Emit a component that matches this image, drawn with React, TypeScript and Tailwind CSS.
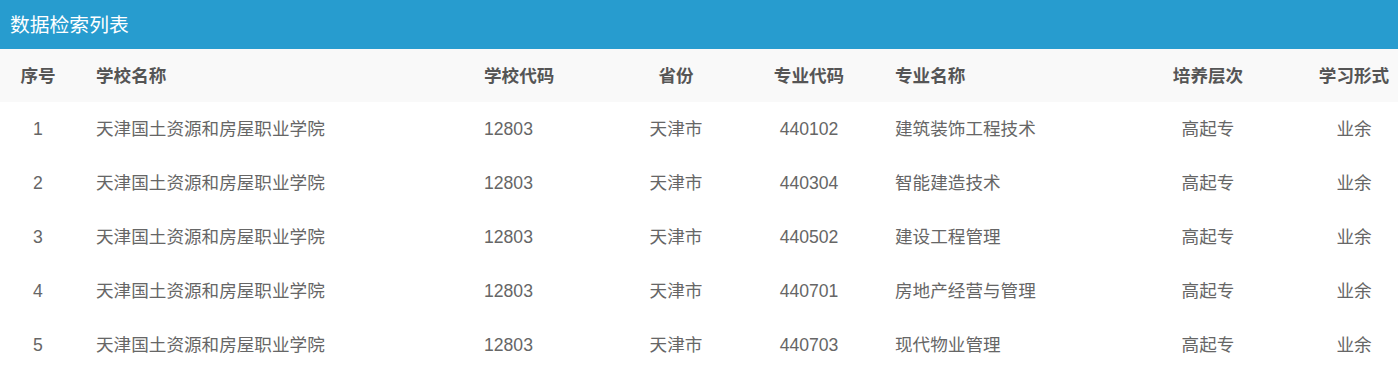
import React from "react";

const cols = [
  { w: "w-[76px]", align: "text-center" },
  { w: "w-[388px]", align: "text-left pl-[20px]" },
  { w: "w-[145px]", align: "text-left pl-[20px]" },
  { w: "w-[134px]", align: "text-center" },
  { w: "w-[132px]", align: "text-center" },
  { w: "w-[231px]", align: "text-left pl-[20px]" },
  { w: "w-[204px]", align: "text-center" },
  { w: "w-[88px]", align: "text-center" },
];

const headers = ["序号", "学校名称", "学校代码", "省份", "专业代码", "专业名称", "培养层次", "学习形式"];

const majors = [
  ["440102", "建筑装饰工程技术"],
  ["440304", "智能建造技术"],
  ["440502", "建设工程管理"],
  ["440701", "房地产经营与管理"],
  ["440703", "现代物业管理"],
];

const rows = majors.map((m, i) => [
  String(i + 1),
  "天津国土资源和房屋职业学院",
  "12803",
  "天津市",
  m[0],
  m[1],
  "高起专",
  "业余",
]);

export default function App() {
  return (
    <div
      className="w-[1398px] h-[375px] bg-white overflow-hidden"
      style={{ fontFamily: '"Liberation Sans", "Noto Sans CJK SC", sans-serif' }}
    >
      <div className="h-[49px] bg-[#279ccf] flex items-center pl-[10px] pt-[2px] text-white text-[19.8px]">
        数据检索列表
      </div>
      <div className="flex h-[53px] bg-[#f9f9f9] items-center pt-[1px] text-[#555] font-bold text-[17.6px]">
        {headers.map((h, i) => (
          <div key={i} className={`${cols[i].w} ${cols[i].align} shrink-0`}>
            {h}
          </div>
        ))}
      </div>
      {rows.map((r, ri) => (
        <div key={ri} className="flex h-[54px] items-center pt-[1px] text-[#666] text-[17.6px]">
          {r.map((c, i) => (
            <div key={i} className={`${cols[i].w} ${cols[i].align} shrink-0`}>
              {c}
            </div>
          ))}
        </div>
      ))}
    </div>
  );
}
